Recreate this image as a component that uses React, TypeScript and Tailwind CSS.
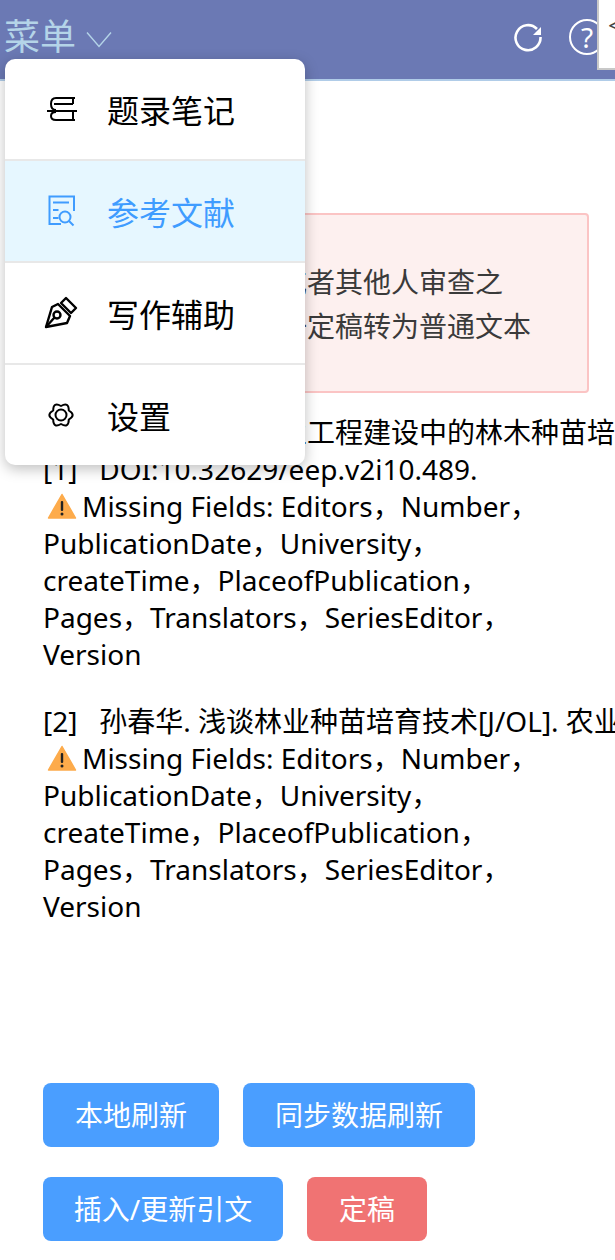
const fontStack = {
  fontFamily: '"Noto Sans", "Noto Sans CJK SC", sans-serif',
};

const missingLines = [
  "Missing Fields: Editors，Number，",
  "PublicationDate，University，",
  "createTime，PlaceofPublication，",
  "Pages，Translators，SeriesEditor，",
  "Version",
];

const NotesIcon = () => (
  <svg width="30" height="26" viewBox="0 0 30 26" fill="none" stroke="currentColor" strokeWidth="2">
    <path d="M28 2H9C5 2 4 5 4 8C4 11 5 14 9 14" />
    <path d="M7 8H26M26 2V8" />
    <path d="M0 15H30" />
    <path d="M9 16C5 16 4 18 4 20C4 23 6 24 9 24H28" />
    <path d="M26 15V24" />
  </svg>
);

const RefIcon = () => (
  <svg width="30" height="34" viewBox="0 0 30 34" fill="none" stroke="currentColor" strokeWidth="2">
    <path d="M27 17V2.5H2.5V30H14" />
    <path d="M6 8.5H22M6 16H11.5M6 24H11.5" />
    <circle cx="18" cy="23" r="5.5" />
    <path d="M22 27L26.5 31.5" />
  </svg>
);

const PenIcon = () => (
  <svg width="34" height="34" viewBox="0 0 34 34" fill="none" stroke="currentColor" strokeWidth="2.4" strokeLinejoin="round">
    <path d="M2 31L8 11L14 8L26 20L23 27Z" />
    <path d="M17 7L22 2L32 12L27 17Z" />
    <circle cx="13" cy="19" r="3.5" />
    <path d="M2 31L10.5 21.5" />
  </svg>
);

const GearIcon = () => (
  <svg width="30" height="26" viewBox="-1 0 30 26" fill="none" stroke="currentColor" strokeWidth="2" strokeLinejoin="round">
    <path d="M13 4Q20.75 -0.4 20.8 8.5Q28.5 13 20.8 17.5Q20.75 26.4 13 22Q5.25 26.4 5.2 17.5Q-2.5 13 5.2 8.5Q5.25 -0.4 13 4Z" />
    <circle cx="13" cy="13" r="5.5" />
  </svg>
);

const WarnIcon = () => (
  <svg width="30" height="26" viewBox="0 0 30 26" className="shrink-0">
    <path d="M15 1.5L28.5 25H1.5Z" fill="#fdab4b" stroke="#fdab4b" strokeWidth="1.5" strokeLinejoin="round" />
    <rect x="13.8" y="8" width="2.4" height="10" rx="1" fill="#222" />
    <circle cx="15" cy="21" r="1.5" fill="#222" />
  </svg>
);

const Warning = () => (
  <div>
    <div className="flex h-[37px] items-center pb-[1px] whitespace-nowrap">
      <span className="mr-[5px] ml-[4px] flex">
        <WarnIcon />
      </span>
      {missingLines[0]}
    </div>
    {missingLines.slice(1).map((line) => (
      <div key={line} className="h-[37px] leading-[37px] whitespace-nowrap">
        {line}
      </div>
    ))}
  </div>
);

const MenuItem = ({
  icon,
  label,
  active,
  last,
}: {
  icon: React.ReactNode;
  label: string;
  active?: boolean;
  last?: boolean;
}) => (
  <div
    className={`flex items-center pl-[42px] text-[32px] ${
      active ? "bg-[#e6f7ff] text-[#3f9cff]" : "text-black"
    } ${last ? "h-[100px]" : "h-[102px] border-b-2 border-[#e8e8e8]"}`}
  >
    <span className="flex w-[60px] items-center">{icon}</span>
    <span className="pt-[4px]">{label}</span>
  </div>
);

export default function App() {
  return (
    <div
      className="relative h-[1260px] w-[615px] overflow-hidden bg-white text-[28px] text-black"
      style={fontStack}
    >
      <header className="flex h-[81px] items-center justify-between border-b-2 border-[#b0cce8] bg-[#6b79b4] pl-[4px]">
        <div className="flex items-center pb-[6px] text-[36px] text-[#b4d4e8]">
          菜单
          <svg width="26" height="18" viewBox="0 0 26 18" fill="none" stroke="currentColor" strokeWidth="1.4" className="mt-[6px] ml-[10px]">
            <path d="M1 1.5L13 15.5L25 1.5" />
          </svg>
        </div>
        <div className="flex items-center gap-[26px] pr-[10px] pb-[5px] text-white">
          <svg width="30" height="30" viewBox="0 0 30 30" fill="none" stroke="currentColor" strokeWidth="2.6">
            <path d="M24 7A12.5 12.5 0 1 0 27.5 15" />
            <path d="M28 5V13H20Z" fill="currentColor" stroke="none" />
          </svg>
          <div className="flex h-[36px] w-[36px] items-center justify-center rounded-full border-2 border-white text-[28px] leading-none">
            ?
          </div>
        </div>
      </header>

      <div className="absolute top-0 right-0 flex h-[70px] w-[18px] items-start border-b-2 border-l-2 border-[#c8c8c8] bg-white pt-[10px] pl-[9px] text-[24px] leading-[30px] text-[#444]">
        &lt;
      </div>

      <nav className="absolute top-[59px] left-[5px] w-[300px] overflow-hidden rounded-[10px] bg-white shadow-[0_4px_14px_rgba(0,0,0,0.25)]">
        <MenuItem icon={<NotesIcon />} label="题录笔记" />
        <MenuItem icon={<RefIcon />} label="参考文献" active />
        <MenuItem icon={<span className="-ml-[3px] flex"><PenIcon /></span>} label="写作辅助" />
        <MenuItem icon={<GearIcon />} label="设置" last />
      </nav>

      <main className="pt-[132px] pl-[43px]">
        <div className="ml-[1px] h-[180px] w-[545px] rounded border-2 border-[#fbc4c4] bg-[#fdf0ef] py-[45px] pl-[9px] leading-[44px] whitespace-nowrap text-[#3a3a3a]">
          <div>本文档提交给导师或者其他人审查之</div>
          <div>前，请先把引文统一定稿转为普通文本</div>
        </div>

        <div className="mt-[21px] h-[37px] pl-[152px] leading-[37px] whitespace-nowrap">
          浅谈林业工程建设中的林木种苗培育
        </div>
        <div className="h-[37px] leading-[37px] whitespace-pre">[1]   DOI:10.32629/eep.v2i10.489.</div>
        <Warning />

        <div className="mt-[30px] h-[37px] leading-[37px] whitespace-pre">
          [2]   孙春华. 浅谈林业种苗培育技术[J/OL]. 农业科技
        </div>
        <Warning />

        <div className="mt-[158px] flex gap-[24px]">
          <button className="h-[64px] rounded-lg bg-[#4a9eff] px-[32px] text-white">本地刷新</button>
          <button className="h-[64px] rounded-lg bg-[#4a9eff] px-[32px] text-white">同步数据刷新</button>
        </div>
        <div className="mt-[30px] flex gap-[24px]">
          <button className="h-[64px] w-[240px] rounded-lg bg-[#4a9eff] text-white">插入/更新引文</button>
          <button className="h-[64px] rounded-lg bg-[#f07373] px-[32px] text-white">定稿</button>
        </div>
      </main>
    </div>
  );
}
